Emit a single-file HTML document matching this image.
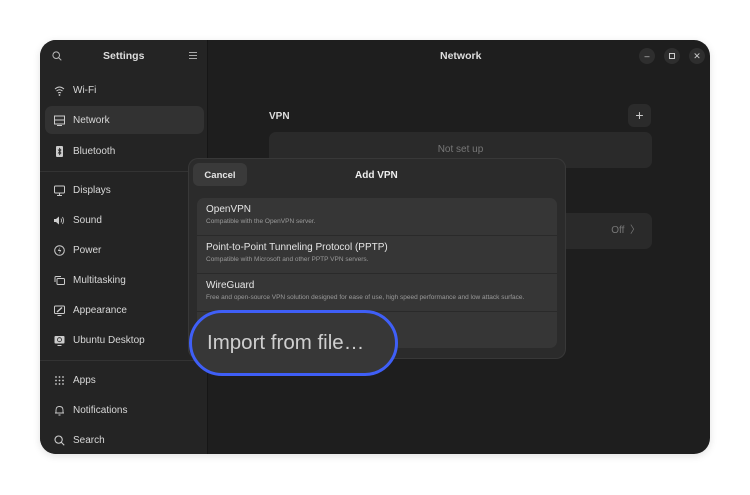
<!DOCTYPE html>
<html><head><style>
*{margin:0;padding:0;box-sizing:border-box}
body{width:750px;height:495px;background:#fff;font-family:"Liberation Sans","DejaVu Sans",sans-serif;position:relative;overflow:hidden}
.win{position:absolute;left:40px;top:40px;width:670px;height:414px;border-radius:16px;background:#1e1e1e;overflow:hidden;box-shadow:0 2px 8px rgba(0,0,0,.12)}
.side{position:absolute;left:0;top:0;width:168px;height:414px;background:#242424;border-right:1px solid #161616}
.t{position:absolute;color:#ddd;font-size:10px}
.b{font-weight:bold}
.item{position:absolute;left:5px;width:159px;height:28px;border-radius:7px;color:#d8d8d8;font-size:10px;line-height:28px;padding-left:28px}
.item svg{position:absolute;left:9px;top:8px}
.sel{background:#323232;line-height:30px}
.hr{position:absolute;left:0;width:168px;height:1px;background:#333}
.dlg{position:absolute;left:149px;top:119px;width:376px;height:199px;background:#2b2b2b;border-radius:9px;box-shadow:0 0 0 1px #383838}
.rows{position:absolute;left:8px;top:39px;width:360px;height:150px;background:#363636;border-radius:7px;overflow:hidden}
.row{height:38px;border-bottom:1px solid #2a2a2a;padding:5px 9px}
.row .a{color:#e6e6e6;font-size:10px;line-height:14px}
.row .s{color:#9a9a9a;font-size:6.5px;line-height:10px}
.wb{position:absolute;top:8px;width:16px;height:16px;border-radius:50%;background:#2e2e2e;color:#ccc;font-size:9px;text-align:center;line-height:16px}
</style></head><body>
<div class="win">
 <div class="side">
  <svg style="position:absolute;left:12px;top:11px" width="10" height="10" viewBox="0 0 10 10"><circle cx="4.2" cy="4.2" r="3.3" fill="none" stroke="#bbb" stroke-width="1"/><path d="M6.6 6.6L9.3 9.3" stroke="#bbb" stroke-width="1"/></svg>
  <div class="t b" style="left:63px;top:10px;font-size:10.5px;color:#ddd">Settings</div>
  <svg style="position:absolute;left:149px;top:12px" width="8" height="7"><path d="M0 .5H8M0 3.5H8M0 6.5H8" stroke="#aaa"/></svg>
  <div class="item" style="top:37px"><svg width="11" height="11" viewBox="0 0 11 11"><path d="M1 4Q5.5 0 10 4M2.5 6Q5.5 3.5 8.5 6M4 8Q5.5 7 7 8" fill="none" stroke="#ccc"/><circle cx="5.5" cy="10" r=".9" fill="#ccc"/></svg>Wi-Fi</div>
  <div class="item sel" style="top:66px"><svg width="11" height="11" viewBox="0 0 11 11" style="top:9px"><rect x=".5" y="1" width="10" height="4" fill="none" stroke="#ccc"/><rect x=".5" y="5" width="10" height="4" fill="none" stroke="#ccc"/><path d="M3 10.5H8" stroke="#ccc"/></svg>Network</div>
  <div class="item" style="top:98px"><svg width="11" height="11" viewBox="0 0 11 11"><rect x="2" y="0" width="7" height="11" rx="1" fill="#ccc"/><path d="M4 3.5L7 7L5.5 8.5V2.5L7 4L4 7.5" fill="none" stroke="#242424" stroke-width=".8"/></svg>Bluetooth</div>
  <div class="hr" style="top:131px"></div>
  <div class="item" style="top:137px"><svg width="11" height="11" viewBox="0 0 11 11"><rect x=".5" y="1" width="10" height="7" rx="1" fill="none" stroke="#ccc"/><path d="M3 10.5H8M5.5 8V10.5" stroke="#ccc"/></svg>Displays</div>
  <div class="item" style="top:167px"><svg width="11" height="11" viewBox="0 0 11 11"><path d="M0 4H2L5 1.5V9.5L2 7H0Z" fill="#ccc"/><path d="M7 3.5Q8 5.5 7 7.5M8.5 2Q10.5 5.5 8.5 9" fill="none" stroke="#ccc" stroke-width=".8"/></svg>Sound</div>
  <div class="item" style="top:197px"><svg width="11" height="11" viewBox="0 0 11 11"><circle cx="5.5" cy="5.5" r="4.8" fill="none" stroke="#ccc"/><path d="M6 2L3.8 6H6L5 9L7.3 5H5.3Z" fill="#ccc"/></svg>Power</div>
  <div class="item" style="top:227px"><svg width="11" height="11" viewBox="0 0 11 11"><rect x="3" y="3.5" width="7.5" height="6" rx="1" fill="none" stroke="#ccc"/><path d="M1 7V2.5Q1 1.5 2 1.5H7" fill="none" stroke="#ccc"/></svg>Multitasking</div>
  <div class="item" style="top:257px"><svg width="11" height="11" viewBox="0 0 11 11"><rect x=".5" y="1" width="10" height="7.5" rx="1" fill="none" stroke="#ccc"/><path d="M3 7L8 2.5" stroke="#ccc" stroke-width="1.5"/><path d="M3.5 10.5H7.5" stroke="#ccc"/></svg>Appearance</div>
  <div class="item" style="top:287px"><svg width="11" height="11" viewBox="0 0 11 11"><rect x=".5" y="1" width="10" height="7.5" rx="1" fill="#ccc"/><circle cx="5.5" cy="4.7" r="2" fill="none" stroke="#242424" stroke-width=".8"/><path d="M3.5 10.5H7.5" stroke="#ccc"/></svg>Ubuntu Desktop</div>
  <div class="hr" style="top:320px"></div>
  <div class="item" style="top:327px"><svg width="11" height="11" viewBox="0 0 11 11" fill="#ccc"><circle cx="2" cy="2" r=".9"/><circle cx="5.5" cy="2" r=".9"/><circle cx="9" cy="2" r=".9"/><circle cx="2" cy="5.5" r=".9"/><circle cx="5.5" cy="5.5" r=".9"/><circle cx="9" cy="5.5" r=".9"/><circle cx="2" cy="9" r=".9"/><circle cx="5.5" cy="9" r=".9"/><circle cx="9" cy="9" r=".9"/></svg>Apps</div>
  <div class="item" style="top:357px"><svg width="11" height="11" viewBox="0 0 11 11"><path d="M2 8V5Q2 1.5 5.5 1.5Q9 1.5 9 5V8H2ZM1 8H10M4.5 10H6.5" fill="none" stroke="#ccc" stroke-width=".9"/></svg>Notifications</div>
  <div class="item" style="top:387px"><svg width="11" height="11" viewBox="0 0 10 10"><circle cx="4.2" cy="4.2" r="3.3" fill="none" stroke="#ccc"/><path d="M6.6 6.6L9.3 9.3" stroke="#ccc"/></svg>Search</div>
 </div>
 <div class="t b" style="left:400px;top:10px;font-size:10.5px">Network</div>
 <div class="wb" style="left:599px">–</div>
 <div class="wb" style="left:624px"><span style="display:inline-block;width:6px;height:6px;border:1px solid #ccc;margin-top:5px;vertical-align:top"></span></div>
 <div class="wb" style="left:649px">✕</div>
 <div class="t b" style="left:229px;top:71px">VPN</div>
 <div style="position:absolute;left:588px;top:64px;width:23px;height:23px;border-radius:6px;background:#2b2b2b;color:#ccc;text-align:center;line-height:22px;font-size:14px">+</div>
 <div style="position:absolute;left:229px;top:92px;width:383px;height:36px;border-radius:7px;background:#2a2a2a;color:#777;font-size:10px;text-align:center;line-height:36px">Not set up</div>
 <div style="position:absolute;left:229px;top:173px;width:383px;height:36px;border-radius:7px;background:#2a2a2a;color:#777;font-size:10px;line-height:36px;text-align:right;padding-right:12px">Off &nbsp;〉</div>
 <div class="dlg">
  <div style="position:absolute;left:4px;top:4px;width:54px;height:23px;border-radius:6px;background:#3a3a3a;color:#e6e6e6;font-size:9.5px;font-weight:bold;text-align:center;line-height:25px">Cancel</div>
  <div class="t b" style="left:166px;top:11px;color:#eee">Add VPN</div>
  <div class="rows">
   <div class="row"><div class="a">OpenVPN</div><div class="s">Compatible with the OpenVPN server.</div></div>
   <div class="row"><div class="a">Point-to-Point Tunneling Protocol (PPTP)</div><div class="s">Compatible with Microsoft and other PPTP VPN servers.</div></div>
   <div class="row"><div class="a">WireGuard</div><div class="s">Free and open-source VPN solution designed for ease of use, high speed performance and low attack surface.</div></div>
  </div>
 </div>
</div>
<div style="position:absolute;left:189px;top:310px;width:209px;height:66px;border-radius:33px;border:3px solid #3f5ff7;background:#373737;color:#cfcfcf;font-size:20.5px;line-height:60px;padding-left:15px">Import from file…</div>
</body></html>
